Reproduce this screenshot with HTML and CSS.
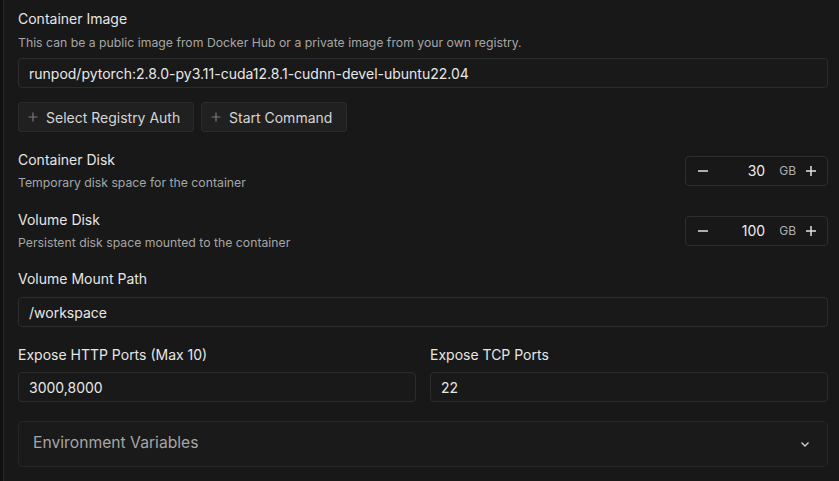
FILE: index.html
```html
<!DOCTYPE html>
<html>
<head>
<meta charset="utf-8">
<link rel="stylesheet" href="styles.css">
</head>
<body>
<div class="shell">
  <div class="panel">
    <section class="field first">
      <div class="label">Container Image</div>
      <div class="desc">This can be a public image from Docker Hub or a private image from your own registry.</div>
      <div class="input mt7">runpod/pytorch:2.8.0-py3.11-cuda12.8.1-cudnn-devel-ubuntu22.04</div>
      <div class="btns">
        <button class="btn"><svg class="plus" viewBox="0 0 10 10"><path d="M5 0.5V9.5M0.5 5H9.5"/></svg><span>Select Registry Auth</span></button>
        <button class="btn btn2"><svg class="plus" viewBox="0 0 10 10"><path d="M5 0.5V9.5M0.5 5H9.5"/></svg><span>Start Command</span></button>
      </div>
    </section>

    <section class="row">
      <div class="rowtext">
        <div class="label">Container Disk</div>
        <div class="desc sm">Temporary disk space for the container</div>
      </div>
      <div class="stepper">
        <svg class="ic" viewBox="0 0 12 12"><path d="M1 6H11"/></svg>
        <span class="val">30</span>
        <span class="unit">GB</span>
        <svg class="ic" viewBox="0 0 12 12"><path d="M6 1V11M1 6H11"/></svg>
      </div>
    </section>

    <section class="row">
      <div class="rowtext">
        <div class="label">Volume Disk</div>
        <div class="desc sm">Persistent disk space mounted to the container</div>
      </div>
      <div class="stepper">
        <svg class="ic" viewBox="0 0 12 12"><path d="M1 6H11"/></svg>
        <span class="val">100</span>
        <span class="unit">GB</span>
        <svg class="ic" viewBox="0 0 12 12"><path d="M6 1V11M1 6H11"/></svg>
      </div>
    </section>

    <section class="field">
      <div class="label">Volume Mount Path</div>
      <div class="input mt8">/workspace</div>
    </section>

    <section class="grid">
      <div class="col">
        <div class="label">Expose HTTP Ports (Max 10)</div>
        <div class="input mt7">3000,8000</div>
      </div>
      <div class="col">
        <div class="label">Expose TCP Ports</div>
        <div class="input mt7">22</div>
      </div>
    </section>

    <section class="env">
      <span class="envtitle">Environment Variables</span>
      <svg class="chev" viewBox="0 0 12 12"><path d="M2.5 4.5L6 8L9.5 4.5"/></svg>
    </section>
  </div>
</div>
</body>
</html>
```

FILE: styles.css
```css
* { box-sizing: border-box; }
html, body {
  margin: 0;
  padding: 0;
  height: 100%;
  background: #101010;
  font-family: Inter, "Noto Sans", sans-serif;
  overflow: hidden;
}
.shell {
  padding-left: 3px;
  height: 100%;
}
.panel {
  height: 100%;
  background: #181818;
  border-left: 1px solid #272727;
  padding: 9px 11px 0 14px;
  display: flex;
  flex-direction: column;
}
.label {
  font-size: 14px;
  line-height: 20px;
  color: #e6e6e6;
}
.desc {
  margin-top: 6px;
  font-size: 12.25px;
  line-height: 16px;
  color: #a6a6a6;
}
.desc.sm { margin-top: 5px; }
.input {
  height: 30px;
  border: 1px solid #2c2c2c;
  border-radius: 4px;
  background: #191919;
  padding: 0 10px;
  display: flex;
  align-items: center;
  font-size: 14px;
  color: #e8e8e8;
}
.mt7 { margin-top: 7px; }
.mt8 { margin-top: 8px; }
.btns {
  margin-top: 14px;
  display: flex;
  gap: 7px;
}
.btn {
  height: 30px;
  width: 176px;
  border: 1px solid #2a2a2a;
  border-radius: 3px;
  background: #202020;
  color: #d6d6d6;
  font-family: inherit;
  font-size: 14px;
  display: flex;
  align-items: center;
  padding: 0 0 0 9px;
  gap: 8px;
}
.btn2 { width: 146px; }
.plus {
  width: 10px;
  height: 10px;
  stroke: #7a7a7a;
  stroke-width: 1.2;
  fill: none;
}
.row {
  margin-top: 18px;
  display: flex;
  justify-content: space-between;
  align-items: center;
}
.row + .row { margin-top: 19px; }
.stepper {
  width: 143px;
  height: 30px;
  border: 1px solid #2e2e2e;
  border-radius: 4px;
  display: flex;
  align-items: center;
  padding: 0 10px 0 11px;
}
.ic {
  width: 12px;
  height: 12px;
  stroke: #e0e0e0;
  stroke-width: 1.5;
  fill: none;
  flex: none;
}
.val {
  flex: 1;
  text-align: right;
  font-size: 14px;
  color: #ececec;
}
.unit {
  margin: 0 9px 0 14px;
  font-size: 12px;
  color: #b0b0b0;
}
.field { display: flex; flex-direction: column; }
.field:not(.first) { margin-top: 18px; }
.grid {
  margin-top: 18px;
  display: grid;
  grid-template-columns: 1fr 1fr;
  gap: 14px;
}
.col { display: flex; flex-direction: column; }
.env {
  margin-top: 19px;
  height: 46px;
  border: 1px solid #252525;
  border-radius: 4px;
  background: #1a1a1a;
  display: flex;
  align-items: center;
  justify-content: space-between;
  padding: 0 16px 3px 14px;
}
.envtitle {
  font-size: 15.7px;
  color: #a6a6a6;
}
.chev {
  width: 12px;
  height: 12px;
  stroke: #cfcfcf;
  stroke-width: 1.4;
  fill: none;
  margin-top: 3px;
}
```
